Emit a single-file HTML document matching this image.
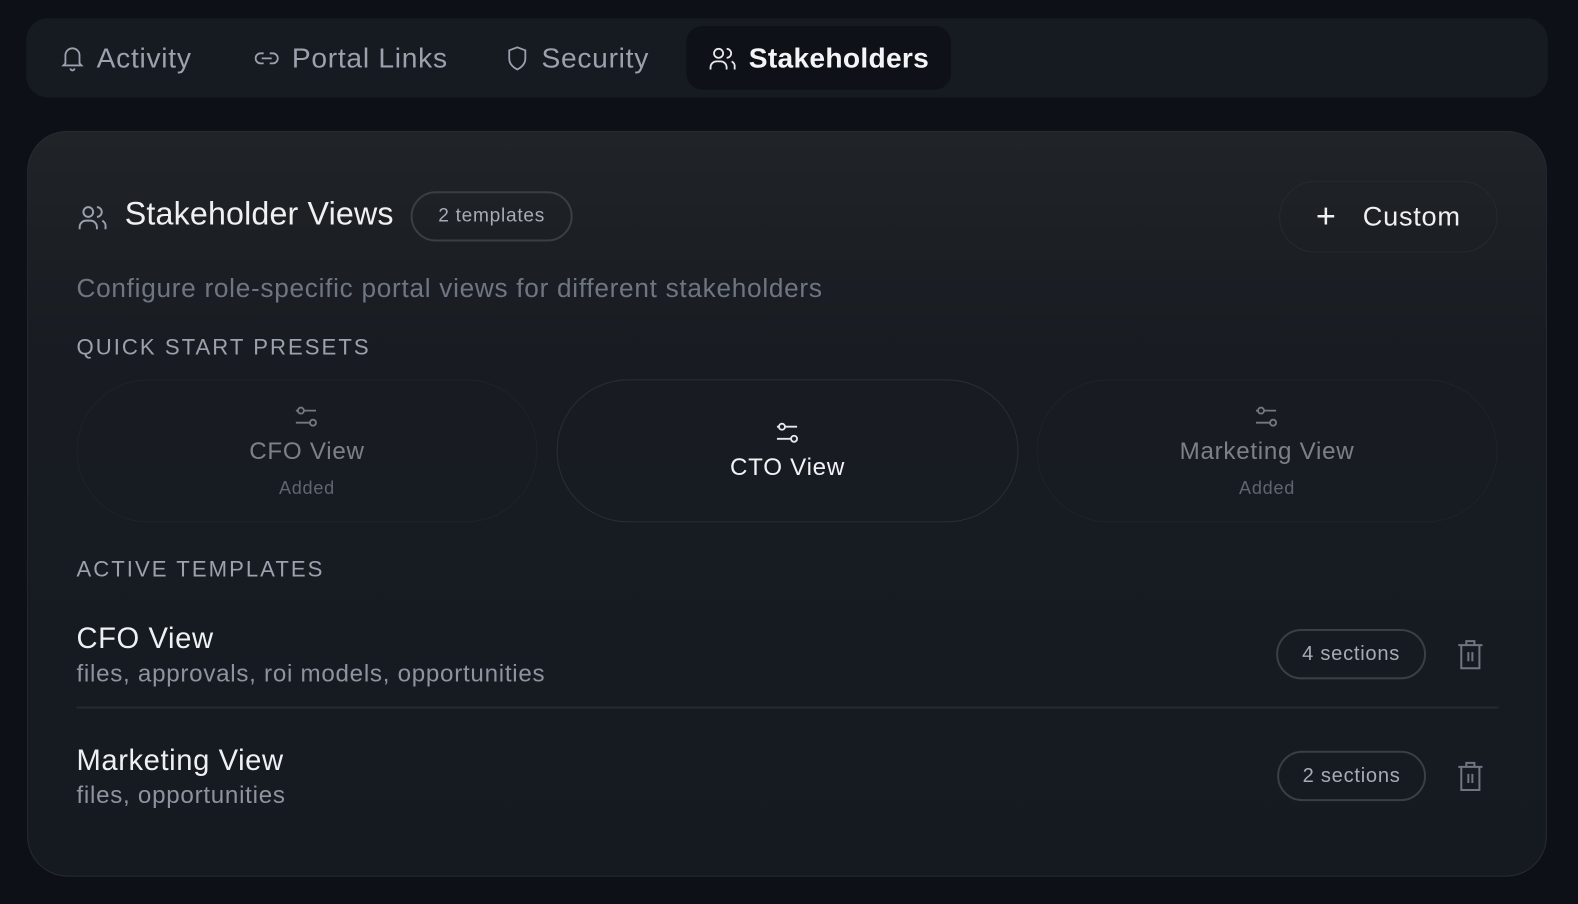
<!DOCTYPE html>
<html><head><style>
*{box-sizing:border-box;margin:0;padding:0}
body{width:1578px;height:904px;background:#0d1117;font-family:"Liberation Sans",sans-serif;overflow:hidden;color:#e6e8eb;letter-spacing:0.045em}
#w{position:relative;width:1568px;height:898px;transform:scale(1.0064);transform-origin:0 0}
.tabs{position:absolute;left:26px;top:18px;width:1512px;height:79px;background:#161a21;border-radius:22px}
.tab{position:absolute;top:8px;height:63px;display:flex;align-items:center;font-size:28px;color:#9ba1ad;white-space:nowrap}
.tab svg{margin-right:12px;flex-shrink:0}
.tab.active{background:#0e1117;border-radius:16px;color:#f3f4f6;font-weight:bold;padding:0 22px;letter-spacing:0.01em;width:263px}
.card{position:absolute;left:27px;top:130px;width:1510px;height:741px;border-radius:40px;background:linear-gradient(#202428,#181c22 30%,#151a21);border:1px solid #282c31}
.abs{position:absolute;white-space:nowrap}
.pill{position:absolute;border:2px solid #3a3e45;border-radius:30px;display:flex;align-items:center;justify-content:center;color:#a6acb6}
.preset{position:absolute;top:246px;height:142px;border:1.5px solid #252a30;border-radius:72px;display:flex;flex-direction:column;align-items:center;justify-content:center}
.lbl{font-size:22px;letter-spacing:2px;color:#9ba1ad}
</style></head><body><div id="w">
<div class="tabs">
 <div class="tab" style="left:34px"><svg width="24" height="28" viewBox="0 0 24 28" fill="none" stroke="#9ba1ad" stroke-width="1.8"><path d="M5 19V11a7 7 0 0 1 14 0v8l2 2H3z"/><path d="M10 24a2 2 0 0 0 4 0"/></svg>Activity</div>
 <div class="tab" style="left:226px"><svg width="26" height="20" viewBox="0 0 26 20" fill="none" stroke="#9ba1ad" stroke-width="1.8"><path d="M10 5H7a5 5 0 0 0 0 10h3M16 5h3a5 5 0 0 1 0 10h-3M8 10h10"/></svg>Portal Links</div>
 <div class="tab" style="left:476px"><svg width="24" height="28" viewBox="0 0 24 28" fill="none" stroke="#9ba1ad" stroke-width="1.8"><path d="M12 3l8 3v8c0 6-4 9-8 11-4-2-8-5-8-11V6z"/></svg>Security</div>
 <div class="tab active" style="left:656px"><svg width="28" height="28" viewBox="0 0 28 28" fill="none" stroke="#e6e8eb" stroke-width="1.8"><circle cx="10" cy="9" r="4.5"/><path d="M2 25v-2a6 6 0 0 1 6-6h4a6 6 0 0 1 6 6v2M18 4.5a4.5 4.5 0 0 1 0 9M23 17a6 6 0 0 1 3 6v2"/></svg>Stakeholders</div>
</div>
<div class="card">
 <svg class="abs" style="left:48px;top:70px" width="32" height="30" viewBox="0 0 28 28" fill="none" stroke="#9ba1ad" stroke-width="1.8"><circle cx="10" cy="9" r="4.5"/><path d="M2 25v-2a6 6 0 0 1 6-6h4a6 6 0 0 1 6 6v2M18 4.5a4.5 4.5 0 0 1 0 9M23 17a6 6 0 0 1 3 6v2"/></svg>
 <div class="abs" style="left:96px;top:63px;font-size:32px;color:#eef0f2;letter-spacing:0.005em">Stakeholder Views</div>
 <div class="pill" style="left:380px;top:59px;width:161px;height:50px;font-size:19px">2 templates</div>
 <div class="pill" style="left:1243px;top:49px;width:217px;height:71px;border:1.5px solid #262a30;color:#eef0f2;font-size:27px;border-radius:36px"><span style="font-size:34px;font-weight:300;margin-right:26px">+</span>Custom</div>
 <div class="abs" style="left:48px;top:140px;font-size:26px;color:#6f7682">Configure role-specific portal views for different stakeholders</div>
 <div class="abs lbl" style="left:48px;top:201px">QUICK START PRESETS</div>
 <div class="preset" style="left:48px;width:458px;opacity:.55"><svg width="26" height="26" viewBox="0 0 26 26" fill="none" stroke="#c0c4cc" stroke-width="1.8"><path d="M2 7h20M2 19h20"/><circle cx="7" cy="7" r="3" fill="#1b1f24"/><circle cx="19" cy="19" r="3" fill="#1b1f24"/></svg><div style="font-size:24px;color:#d0d4da;margin-top:8px">CFO View</div><div style="font-size:18px;color:#9ba1ad;margin-top:12px">Added</div></div>
 <div class="preset" style="left:525px;width:459px;border-color:#2a2f35"><svg width="26" height="26" viewBox="0 0 26 26" fill="none" stroke="#e6e8eb" stroke-width="1.8"><path d="M2 7h20M2 19h20"/><circle cx="7" cy="7" r="3" fill="#1b1f24"/><circle cx="19" cy="19" r="3" fill="#1b1f24"/></svg><div style="font-size:24px;color:#f0f2f4;margin-top:8px">CTO View</div></div>
 <div class="preset" style="left:1002px;width:458px;opacity:.55"><svg width="26" height="26" viewBox="0 0 26 26" fill="none" stroke="#c0c4cc" stroke-width="1.8"><path d="M2 7h20M2 19h20"/><circle cx="7" cy="7" r="3" fill="#1b1f24"/><circle cx="19" cy="19" r="3" fill="#1b1f24"/></svg><div style="font-size:24px;color:#d0d4da;margin-top:8px">Marketing View</div><div style="font-size:18px;color:#9ba1ad;margin-top:12px">Added</div></div>
 <div class="abs lbl" style="left:48px;top:422px">ACTIVE TEMPLATES</div>
 <div class="abs" style="left:48px;top:488px;font-size:29px;color:#eef0f2;letter-spacing:0.02em">CFO View</div>
 <div class="abs" style="left:48px;top:525px;font-size:24px;color:#8e949f">files, approvals, roi models, opportunities</div>
 <div class="pill" style="left:1240px;top:494px;width:149px;height:50px;font-size:20px">4 sections</div>
 <svg class="abs" style="left:1418px;top:503px" width="30" height="34" viewBox="0 0 30 34" fill="none" stroke="#6f7682" stroke-width="2"><path d="M3 7h24M11 7V3h8v4M6 7v23h18V7M13 14v9M17 14v9"/></svg>
 <div class="abs" style="left:48px;top:571px;width:1413px;height:2px;background:#252a30"></div>
 <div class="abs" style="left:48px;top:609px;font-size:29px;color:#eef0f2;letter-spacing:0.02em">Marketing View</div>
 <div class="abs" style="left:48px;top:646px;font-size:24px;color:#8e949f">files, opportunities</div>
 <div class="pill" style="left:1241px;top:615px;width:148px;height:50px;font-size:20px">2 sections</div>
 <svg class="abs" style="left:1418px;top:624px" width="30" height="34" viewBox="0 0 30 34" fill="none" stroke="#6f7682" stroke-width="2"><path d="M3 7h24M11 7V3h8v4M6 7v23h18V7M13 14v9M17 14v9"/></svg>
</div>
</div></body></html>
